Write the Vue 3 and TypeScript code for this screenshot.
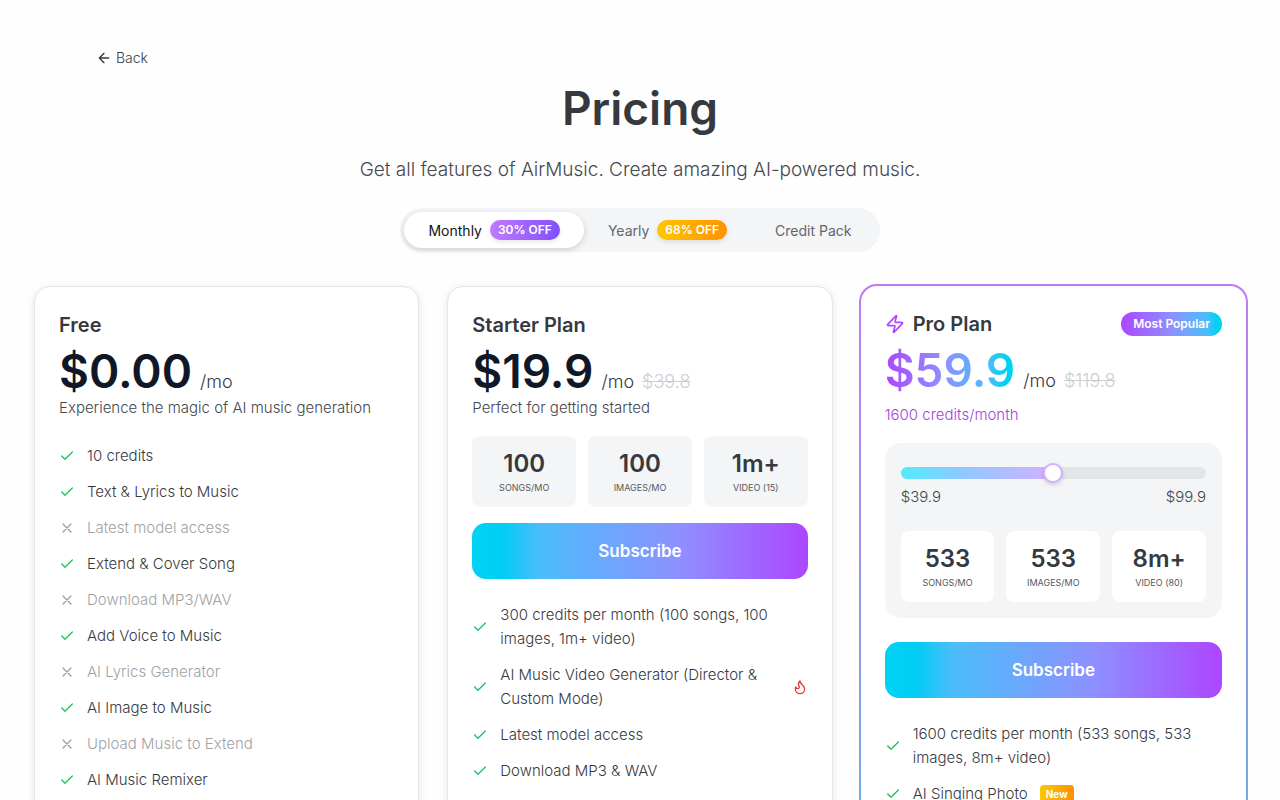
<script setup lang="ts">
import { computed, ref } from 'vue'

interface Feature {
  text: string
  included: boolean
  hot?: boolean
  badge?: string
}

interface Stat {
  value: string
  label: string
}

interface Period {
  id: string
  label: string
  discount?: string
}

const periods: Period[] = [
  { id: 'monthly', label: 'Monthly', discount: '30% OFF' },
  { id: 'yearly', label: 'Yearly', discount: '68% OFF' },
  { id: 'credits', label: 'Credit Pack' },
]
const activePeriod = ref('monthly')

const freeFeatures: Feature[] = [
  { text: '10 credits', included: true },
  { text: 'Text & Lyrics to Music', included: true },
  { text: 'Latest model access', included: false },
  { text: 'Extend & Cover Song', included: true },
  { text: 'Download MP3/WAV', included: false },
  { text: 'Add Voice to Music', included: true },
  { text: 'AI Lyrics Generator', included: false },
  { text: 'AI Image to Music', included: true },
  { text: 'Upload Music to Extend', included: false },
  { text: 'AI Music Remixer', included: true },
]

const starterStats: Stat[] = [
  { value: '100', label: 'SONGS/MO' },
  { value: '100', label: 'IMAGES/MO' },
  { value: '1m+', label: 'VIDEO (15)' },
]

const starterFeatures: Feature[] = [
  { text: '300 credits per month (100 songs, 100 images, 1m+ video)', included: true },
  { text: 'AI Music Video Generator (Director & Custom Mode)', included: true, hot: true },
  { text: 'Latest model access', included: true },
  { text: 'Download MP3 & WAV', included: true },
]

const proStats: Stat[] = [
  { value: '533', label: 'SONGS/MO' },
  { value: '533', label: 'IMAGES/MO' },
  { value: '8m+', label: 'VIDEO (80)' },
]

const proFeatures: Feature[] = [
  { text: '1600 credits per month (533 songs, 533 images, 8m+ video)', included: true },
  { text: 'AI Singing Photo', included: true, badge: 'New' },
]

const tier = ref(1)
const fill = computed(() => `${(tier.value / 2) * 100}%`)

const plans = [
  {
    id: 'free', name: 'Free', price: '$0.00', oldPrice: '',
    note: 'Experience the magic of AI music generation',
    stats: [] as Stat[], features: freeFeatures, pro: false,
  },
  {
    id: 'starter', name: 'Starter Plan', price: '$19.9', oldPrice: '$39.8',
    note: 'Perfect for getting started',
    stats: starterStats, features: starterFeatures, pro: false,
  },
  {
    id: 'pro', name: 'Pro Plan', price: '$59.9', oldPrice: '$119.8',
    note: '1600 credits/month',
    stats: proStats, features: proFeatures, pro: true,
  },
]
</script>

<template>
  <main class="page">
    <a class="back" href="#">
      <svg class="icon-back" viewBox="0 0 24 24" aria-hidden="true"><path d="m12 19-7-7 7-7M19 12H5" /></svg>
      Back
    </a>

    <header class="intro">
      <h1>Pricing</h1>
      <p>Get all features of AirMusic. Create amazing AI-powered music.</p>
    </header>

    <div class="periods" role="group" aria-label="Billing period">
      <button
        v-for="p in periods"
        :key="p.id"
        type="button"
        :class="['period', p.id, { active: activePeriod === p.id }]"
        :aria-pressed="activePeriod === p.id"
        @click="activePeriod = p.id"
      >
        {{ p.label }}
        <span v-if="p.discount" class="discount">{{ p.discount }}</span>
      </button>
    </div>

    <section class="plans">
      <div v-for="plan in plans" :key="plan.id" :class="['frame', { 'frame-pro': plan.pro }]">
        <article :class="['card', { 'card-pro': plan.pro }]">
          <div class="card-head">
            <svg v-if="plan.pro" class="icon-bolt" viewBox="0 0 24 24" aria-hidden="true">
              <path d="M4 14a1 1 0 0 1-.78-1.63l9.9-10.2a.5.5 0 0 1 .86.46l-1.92 6.02A1 1 0 0 0 13 10h7a1 1 0 0 1 .78 1.63l-9.9 10.2a.5.5 0 0 1-.86-.46l1.92-6.02A1 1 0 0 0 11 14z" />
            </svg>
            <h2>{{ plan.name }}</h2>
            <span v-if="plan.pro" class="popular">Most Popular</span>
          </div>

          <div class="price-row">
            <span class="price">{{ plan.price }}</span>
            <span class="unit">/mo</span>
            <s v-if="plan.oldPrice" class="old">{{ plan.oldPrice }}</s>
          </div>
          <p class="note">{{ plan.note }}</p>

          <div v-if="plan.stats.length" class="panel">
            <div v-if="plan.pro" class="slider">
              <input
                v-model.number="tier"
                type="range"
                min="0"
                max="2"
                step="1"
                aria-label="Plan price"
                :style="{ '--fill': fill }"
              />
              <div class="range-labels"><span>$39.9</span><span>$99.9</span></div>
            </div>
            <dl class="stats">
              <div v-for="s in plan.stats" :key="s.label" class="stat">
                <dd>{{ s.value }}</dd>
                <dt>{{ s.label }}</dt>
              </div>
            </dl>
          </div>

          <button v-if="plan.stats.length" type="button" class="subscribe">Subscribe</button>

          <ul class="features">
            <li v-for="f in plan.features" :key="f.text" :class="{ off: !f.included }">
              <svg class="mark" viewBox="0 0 24 24" aria-hidden="true">
                <path v-if="f.included" d="M20 6 9 17l-5-5" />
                <path v-else d="M18 6 6 18M6 6l12 12" />
              </svg>
              <span :class="['feature-text', { grow: f.hot }]">{{ f.text }}</span>
              <svg v-if="f.hot" class="icon-hot" viewBox="0 0 24 24" aria-hidden="true">
                <path d="M8.5 14.5A2.5 2.5 0 0 0 11 12c0-1.38-.5-2-1-3-1.072-2.143-.224-4.054 2-6 .5 2.5 2 4.9 4 6.5 2 1.6 3 3.5 3 5.5a7 7 0 1 1-14 0c0-1.153.433-2.294 1-3a2.5 2.5 0 0 0 2.5 2.5z" />
              </svg>
              <span v-if="f.badge" class="badge">{{ f.badge }}</span>
            </li>
          </ul>
        </article>
      </div>
    </section>
  </main>
</template>

<style>
body {
  background: #fefefe;
}
</style>

<style scoped>
.page {
  box-sizing: border-box;
  padding: 48px 32px;
  font-family: Inter, "Liberation Sans", sans-serif;
  font-size: 15px;
  font-weight: 300;
  line-height: 24px;
  color: #36393f;
}

h1,
h2,
p,
dl,
dd,
ul {
  margin: 0;
  padding: 0;
}

button {
  border: 0;
  font-family: inherit;
  cursor: pointer;
}

svg {
  flex: none;
  fill: none;
  stroke: currentColor;
  stroke-width: 2;
  stroke-linecap: round;
  stroke-linejoin: round;
}

.back {
  display: inline-flex;
  align-items: center;
  gap: 4px;
  margin-left: 64px;
  font-size: 14px;
  line-height: 20px;
  color: #36393f;
  text-decoration: none;
  vertical-align: top;
}

.icon-back {
  width: 16px;
  height: 16px;
}

.intro {
  margin-top: 8px;
  text-align: center;
}

h1 {
  font-size: 46px;
  font-weight: 600;
  line-height: 56px;
  color: #36393f;
}

.intro p {
  margin-top: 20px;
  font-size: 19px;
  line-height: 28px;
  color: #45484e;
}

.periods {
  display: flex;
  width: fit-content;
  margin: 24px auto 0;
  padding: 4px;
  border-radius: 22px;
  background: #f3f5f7;
}

.period {
  display: flex;
  align-items: center;
  justify-content: center;
  gap: 8px;
  height: 36px;
  padding: 0 24px;
  border-radius: 18px;
  background: transparent;
  font-size: 14px;
  font-weight: 400;
  color: #62666d;
}

.period.active {
  background: #fff;
  color: #111318;
  box-shadow: 0 2px 6px rgba(0, 0, 0, 0.16);
}

.discount {
  padding: 0 8px;
  border-radius: 10px;
  background: linear-gradient(90deg, #c27aff, #7f50fb);
  box-shadow: 0 2px 4px rgba(0, 0, 0, 0.1);
  font-size: 12px;
  font-weight: 600;
  line-height: 20px;
  color: #fff;
}

.yearly .discount {
  background: linear-gradient(90deg, #fdc700, #ff9200);
}

.plans {
  display: grid;
  grid-template-columns: repeat(3, minmax(0, 1fr));
  gap: 24px;
  min-height: 900px;
  margin-top: 32px;
}

.frame {
  display: flex;
  padding: 2px;
  border-radius: 18px;
}

.frame-pro {
  background: linear-gradient(180deg, #c07af2, #35d0d8);
}

.card {
  flex: 1;
  min-width: 0;
  padding: 24px;
  border: 1px solid #e3e5e8;
  border-radius: 16px;
  background: #fff;
  box-shadow: 0 2px 8px rgba(0, 0, 0, 0.1);
}

.card-pro {
  border: 0;
  box-shadow: none;
}

.card-head {
  display: flex;
  align-items: center;
  gap: 8px;
  height: 28px;
}

.icon-bolt {
  width: 20px;
  height: 20px;
  color: #ad46ff;
}

h2 {
  font-size: 20px;
  font-weight: 600;
  line-height: 28px;
}

.popular {
  margin-left: auto;
  padding: 0 12px;
  border-radius: 12px;
  background: linear-gradient(90deg, #ad46ff, #8e90ff 50%, #4bbdfa 85%, #00d0f3 95%);
  font-size: 12px;
  font-weight: 600;
  line-height: 24px;
  color: #fff;
}

.price-row {
  display: flex;
  align-items: baseline;
  gap: 8px;
  height: 57px;
  line-height: 57px;
}

.price {
  font-size: 46px;
  font-weight: 600;
  line-height: 64px;
  color: #101828;
}

.card-pro .price {
  background: linear-gradient(90deg, #ad46ff, #8e90ff 45%, #4bbdfa 80%, #00d3f2 92%);
  background-clip: text;
  color: transparent;
}

.unit,
.old {
  font-size: 18px;
}

.old {
  color: #ccced2;
}

.note {
  color: #45484e;
}

.card-pro .note {
  margin-top: 8px;
  color: #a23fdc;
}

.panel {
  margin-top: 16px;
}

.card-pro .panel {
  padding: 16px;
  border-radius: 16px;
  background: #f3f5f6;
}

.slider {
  padding-top: 8px;
}

.slider input {
  display: block;
  width: 100%;
  height: 12px;
  margin: 0;
  border-radius: 6px;
  background:
    linear-gradient(90deg, #53eafd, #8fc9ff 40%, #d3b0ff) left / var(--fill) 100% no-repeat,
    #e4e5e8;
  appearance: none;
}

.slider input::-webkit-slider-thumb {
  box-sizing: border-box;
  width: 20px;
  height: 20px;
  border: 2px solid #d3b0ff;
  border-radius: 50%;
  background: #fff;
  box-shadow: 0 2px 4px rgba(0, 0, 0, 0.16);
  appearance: none;
}

.range-labels {
  display: flex;
  justify-content: space-between;
  margin: 8px 0 24px;
  line-height: 20px;
  color: #45484e;
}

.stats {
  display: grid;
  grid-template-columns: repeat(3, minmax(0, 1fr));
  gap: 12px;
}

.stat {
  padding: 12px 0;
  border-radius: 8px;
  background: #f3f5f6;
  text-align: center;
}

.card-pro .stat {
  background: #fff;
}

dd {
  font-size: 24px;
  font-weight: 600;
  line-height: 32px;
}

dt {
  font-size: 9px;
  font-weight: 400;
  line-height: 15px;
  color: #55585e;
}

.subscribe {
  display: block;
  width: 100%;
  height: 56px;
  margin-top: 16px;
  border-radius: 14px;
  background: linear-gradient(90deg, #00d3f2, #00cdf5 9%, #4bbdfa 20%, #8e90ff 62%, #ad46ff);
  font-size: 17px;
  font-weight: 600;
  color: #fff;
}

.card-pro .subscribe {
  margin-top: 24px;
}

.features {
  display: grid;
  gap: 12px;
  margin-top: 24px;
  list-style: none;
}

.features li {
  display: flex;
  align-items: center;
  gap: 12px;
}

.mark {
  width: 16px;
  height: 16px;
  color: #1fbf62;
}

.off,
.off .mark {
  color: #9fa2a6;
}

.grow {
  flex: 1;
}

.icon-hot {
  width: 16px;
  height: 16px;
  color: #e7343f;
}

.badge {
  padding: 0 6px;
  border-radius: 4px;
  background: linear-gradient(90deg, #fdc700, #ff9200);
  font-size: 10px;
  font-weight: 700;
  line-height: 18px;
  color: #fff;
}
</style>
